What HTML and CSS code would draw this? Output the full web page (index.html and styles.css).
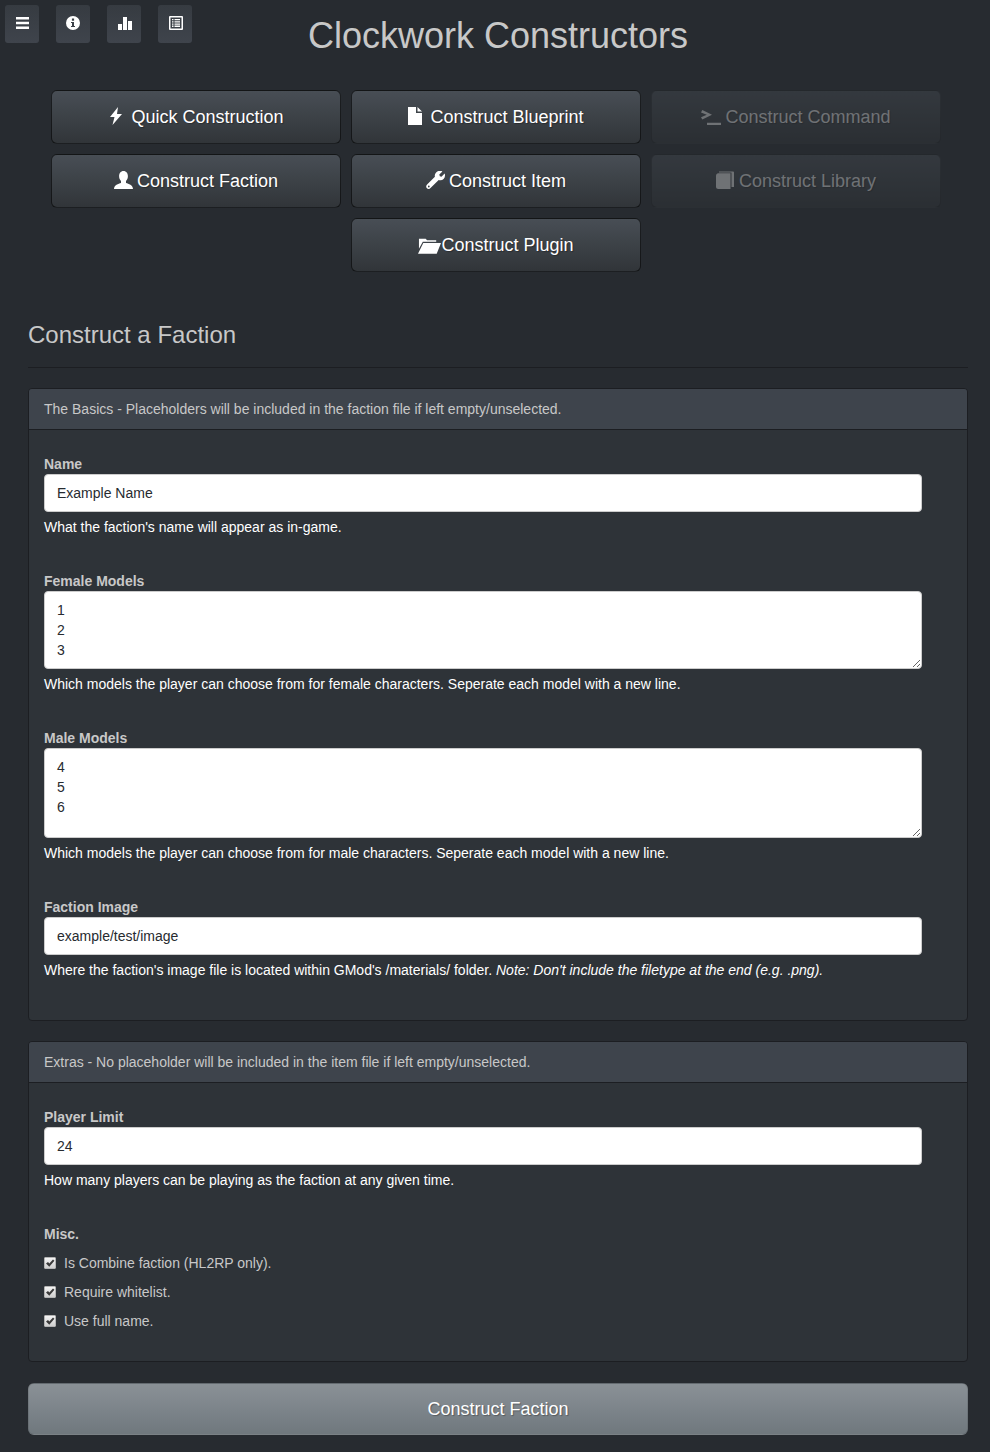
FILE: index.html
```html
<!DOCTYPE html>
<html lang="en">
<head>
<meta charset="utf-8">
<title>Clockwork Constructors</title>
<link rel="stylesheet" href="styles.css">
</head>
<body>
<nav class="tools">
  <a class="tool"><svg class="ti" viewBox="0 0 14 14"><path d="M1 1h13v2.600H1zM1 5.700h13v2.600H1zM1 10.400h13V13H1z"/></svg></a>
  <a class="tool"><svg class="ti" viewBox="0 0 14 14"><path fill-rule="evenodd" d="M7 0a7 7 0 1 1 0 14A7 7 0 0 1 7 0zM5.900 2.600v2.200h2.200V2.600zM5 6v1.100h1v2.800H5V11h4V9.900H8V6z"/></svg></a>
  <a class="tool nudge"><svg class="ti" viewBox="0 0 14 14"><path d="M0 8h4v6H0zM5 1h4v13H5zM10 5h4v9h-4z"/></svg></a>
  <a class="tool nudge"><svg class="ti" viewBox="0 0 14 14"><path fill-rule="evenodd" d="M1 0h12a1 1 0 0 1 1 1v12a1 1 0 0 1-1 1H1a1 1 0 0 1-1-1V1a1 1 0 0 1 1-1zM1.500 1.500v11h11v-11zM3 3h1.500v1.300H3zM5.500 3H11v1.300H5.500zM3 5.200h1.500v1.300H3zM5.500 5.200H11v1.300H5.500zM3 7.400h1.500v1.300H3zM5.500 7.400H11v1.300H5.500zM3 9.600h1.500v1.300H3zM5.500 9.600H11v1.300H5.500z"/></svg></a>
</nav>
<main class="page">
  <h1 class="title">Clockwork Constructors</h1>
  <div class="menu">
    <a class="btn"><svg class="ic w12" viewBox="0 0 12 18"><path d="M8 0 0 10h4.500L2.500 18 12 7H7z"/></svg>Quick Construction</a>
    <a class="btn"><svg class="ic w14" viewBox="0 0 14 18"><path d="M0 0h8v6h6v12H0zM9.500 0 14 4.500H9.500z"/></svg>Construct Blueprint</a>
    <a class="btn off"><svg class="ic term" viewBox="0 0 20 15"><path d="M0 2.400 1.300 0 11 4.800 1.300 9.600 0 7.200 5.800 4.800zM6 12.800h14V15H6z"/></svg>Construct Command</a>
    <a class="btn"><svg class="ic w19" viewBox="0 0 19 18"><path d="M9.500 0c2.800 0 4.400 2.300 4.400 5.200 0 2-.8 3.700-1.900 4.700v2c2.500.8 7 1.800 7 6.100H0c0-4.300 4.500-5.300 7-6.100v-2C5.900 8.900 5.100 7.200 5.100 5.200 5.100 2.300 6.700 0 9.500 0z"/></svg>Construct Faction</a>
    <a class="btn"><svg class="ic w19" viewBox="0 0 19 18"><path fill-rule="evenodd" d="M14.500 0c.8 0 1.400.1 1.900.4L13.300 3.500l.5 1.700 1.700.5L18.600 2.600c.3.500.4 1.100.4 1.900a4.600 4.600 0 0 1-5 4.700c-.5 0-.9-.1-1.300-.2L4.500 17c-1 1.300-2.600 1.300-3.600.2s-1-2.600.2-3.700l7.800-7.700A4.800 4.800 0 0 1 14.500 0zM2.800 14.600a.9.900 0 1 0 0 1.800.9.900 0 0 0 0-1.800z"/></svg>Construct Item</a>
    <a class="btn off"><svg class="ic w18" viewBox="0 0 18 18"><path d="M0 4.500C0 3.200 1 2.200 2.300 2.200H14.500V18H2.300C1 18 0 17 0 15.700z"/><path d="M3 .5h14a1 1 0 0 1 1 1V16h-2.500V1.500H3z"/></svg>Construct Library</a>
    <a class="btn mid"><svg class="ic w23" viewBox="0 0 24 17"><path d="M1 4V1.500h7L9.500 3H19v1.500H5L1 12zM5.500 6H24l-4.500 11H0z"/></svg>Construct Plugin</a>
  </div>

  <h2 class="sub">Construct a Faction</h2>
  <hr class="rule">

  <section class="panel first">
    <div class="head">The Basics - Placeholders will be included in the faction file if left empty/unselected.</div>
    <div class="body">
      <div class="group">
        <label class="lab">Name</label>
        <input class="ctl" type="text" value="Example Name">
        <p class="help">What the faction's name will appear as in-game.</p>
      </div>
      <div class="group">
        <label class="lab">Female Models</label>
        <textarea class="ctl area three">1
2
3</textarea>
        <p class="help">Which models the player can choose from for female characters. Seperate each model with a new line.</p>
      </div>
      <div class="group">
        <label class="lab">Male Models</label>
        <textarea class="ctl area tall">4
5
6</textarea>
        <p class="help">Which models the player can choose from for male characters. Seperate each model with a new line.</p>
      </div>
      <div class="group">
        <label class="lab">Faction Image</label>
        <input class="ctl" type="text" value="example/test/image">
        <p class="help">Where the faction's image file is located within GMod's /materials/ folder. <em>Note: Don't include the filetype at the end (e.g. .png).</em></p>
      </div>
    </div>
  </section>

  <section class="panel">
    <div class="head">Extras - No placeholder will be included in the item file if left empty/unselected.</div>
    <div class="body extras">
      <div class="group">
        <label class="lab">Player Limit</label>
        <input class="ctl" type="text" value="24">
        <p class="help">How many players can be playing as the faction at any given time.</p>
      </div>
      <div class="group">
        <label class="lab">Misc.</label>
        <div class="checks">
          <label class="check"><span class="box"><svg viewBox="0 0 10 10"><path d="M1 5.500 3 3.900l1.300 1.700L8 1.500 9.400 2.800 4.300 8.700z"/></svg></span>Is Combine faction (HL2RP only).</label>
          <label class="check"><span class="box"><svg viewBox="0 0 10 10"><path d="M1 5.500 3 3.900l1.300 1.700L8 1.500 9.400 2.800 4.300 8.700z"/></svg></span>Require whitelist.</label>
          <label class="check"><span class="box"><svg viewBox="0 0 10 10"><path d="M1 5.500 3 3.900l1.300 1.700L8 1.500 9.400 2.800 4.300 8.700z"/></svg></span>Use full name.</label>
        </div>
      </div>
    </div>
  </section>

  <button class="submit" type="button">Construct Faction</button>
</main>
</body>
</html>
```
FILE: styles.css
```css
* { box-sizing: border-box; }
html, body { margin: 0; padding: 0; }
body {
  background: #272b30;
  color: #c8c8c8;
  font-family: "Liberation Sans", Arial, sans-serif;
  font-size: 14px;
  line-height: 20px;
}
.tools {
  position: absolute;
  top: 5px;
  left: 5px;
  display: flex;
  gap: 17px;
}
.tool {
  width: 34px;
  height: 38px;
  border-radius: 3px;
  background: linear-gradient(#363b41, #3f444c);
  display: flex;
  justify-content: center;
  padding-top: 11px;
}
.tool.nudge { padding-left: 2px; }
.ti { width: 14px; height: 14px; fill: #fff; }
.page { width: 940px; margin-left: 28px; padding-bottom: 17px; }
.title {
  margin: 0;
  padding-top: 16px;
  height: 90px;
  text-align: center;
  font-size: 36px;
  line-height: 40px;
  font-weight: 400;
  color: #c8c8c8;
}
.menu {
  display: grid;
  grid-template-columns: repeat(3, 290px);
  gap: 10px;
  margin-left: 23px;
}
.btn {
  height: 54px;
  border: 1px solid rgba(0, 0, 0, .6);
  border-radius: 6px;
  background: linear-gradient(#484e55, #3a3f44 60%, #313539);
  color: #fff;
  font-size: 18px;
  line-height: 24px;
  display: flex;
  align-items: center;
  justify-content: center;
  text-shadow: 1px 1px 1px rgba(0, 0, 0, .3);
}
.btn.off { opacity: .4; color: #dcdcdc; border-color: rgba(0, 0, 0, .3); }
.btn.off .ic { fill: #dcdcdc; }
.mid { grid-column: 2; }
.ic { height: 18px; fill: #fff; margin-right: 8px; flex: none; margin-top: -3px; }
.ic.w12 { width: 12px; margin-left: 2px; margin-right: 9px; }
.ic.w14 { width: 14px; }
.ic.w18 { width: 18px; margin-right: 5px; }
.ic.w19 { width: 19px; margin-right: 4px; }
.ic.w23 { width: 23px; height: 17px; margin-right: 0; margin-top: 0; }
.ic.term { width: 20px; height: 15px; margin-right: 4px; margin-top: 0; }
.sub {
  margin: 48px 0 0;
  font-size: 24px;
  line-height: 30px;
  font-weight: 400;
  color: #c8c8c8;
}
.rule { border: 0; border-top: 1px solid #1c1e22; margin: 17px 0 20px; }
.panel {
  background: #2e3338;
  border: 1px solid #1c1e22;
  border-radius: 4px;
  margin-bottom: 20px;
}
.head {
  background: #3e444c;
  border-bottom: 1px solid #1c1e22;
  border-radius: 3px 3px 0 0;
  padding: 10px 15px;
  height: 41px;
}
.body { padding: 24px 15px 6px; }
.body.extras { padding-bottom: 0; }
.extras .group:last-child { margin-bottom: 0; padding-bottom: 21px; }
.group { margin-bottom: 34px; }
.lab { display: block; font-weight: 700; color: #c8c8c8; }
.ctl {
  display: block;
  width: 878px;
  height: 38px;
  padding: 8px 12px;
  border: 1px solid #ccc;
  border-radius: 4px;
  background: #fff;
  color: #272b30;
  font: 14px/20px "Liberation Sans", Arial, sans-serif;
  margin: 0;
}
.area { resize: vertical; }
.three { height: 78px; }
.tall { height: 90px; }
.help { margin: 5px 0 0; color: #fff; }
.checks { margin-top: 9px; }
.check { display: flex; align-items: center; height: 20px; margin-bottom: 9px; }
.box {
  width: 12px;
  height: 12px;
  margin-right: 8px;
  background: linear-gradient(#f4f4f4, #cfcfcf);
  border: 1px solid #b4b4b4;
  border-radius: 1px;
  display: block;
}
.box svg { display: block; width: 10px; height: 10px; fill: #3a3a3a; }
.submit {
  display: block;
  width: 940px;
  height: 52px;
  margin-top: 21px;
  border: 1px solid rgba(0, 0, 0, .1);
  border-radius: 6px;
  background: linear-gradient(#8a9196, #7a8288 60%, #70787d);
  color: #fff;
  font: 18px/24px "Liberation Sans", Arial, sans-serif;
  text-shadow: 1px 1px 1px rgba(0, 0, 0, .3);
  padding: 0;
}
```
